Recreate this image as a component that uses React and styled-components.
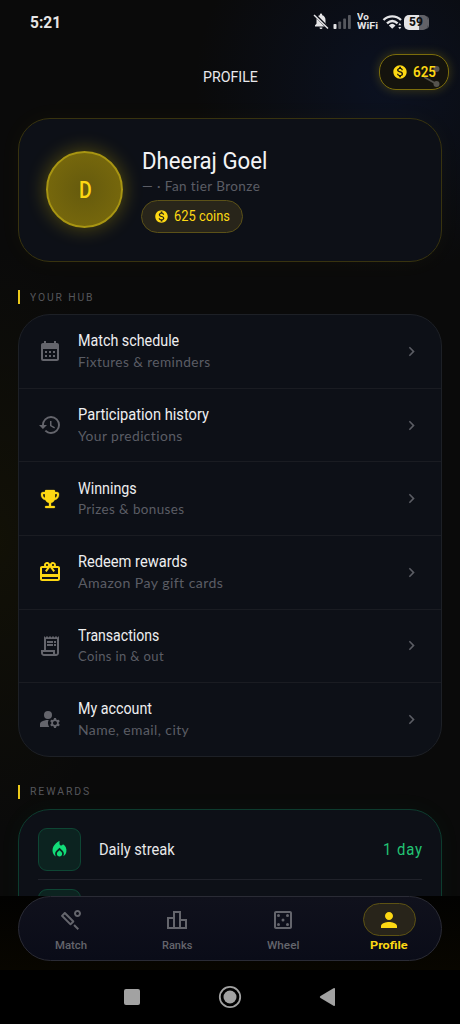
import React, { useLayoutEffect, useRef, useState } from 'react';
import styled, { createGlobalStyle, css } from 'styled-components';
import {
  MdCalendarMonth, MdHistory, MdRedeem, MdOutlineReceiptLong,
  MdManageAccounts, MdLocalFireDepartment, MdMonetizationOn, MdChevronRight,
  MdOutlineSportsCricket, MdOutlineLeaderboard, MdOutlineCasino, MdPerson,
} from 'react-icons/md';

const YELLOW = '#fdd813';
const GREEN = '#12dc78';
const GREY = '#64656c';

const GlobalStyle = createGlobalStyle`
  * { box-sizing: border-box; }
  body {
    margin: 0;
    background: #000;
    font-family: Roboto, "Liberation Sans", sans-serif;
  }
`;

const Screen = styled.div`
  width: 460px;
  height: 1024px;
  display: flex;
  flex-direction: column;
  overflow: hidden;
  background: #000;
`;

const Page = styled.div`
  height: 896px;
  padding: 0 18px;
  overflow: hidden;
  background:
    radial-gradient(circle at 385px 85px, rgba(12, 22, 48, 0.6), transparent 190px),
    radial-gradient(ellipse 130px 290px at 0 540px, rgba(30, 27, 0, 0.38), transparent),
    #0a0a0a;
`;

const StatusBar = styled.div`
  height: 44px;
  display: flex;
  align-items: center;
  justify-content: space-between;
  padding: 0 12px;
`;

const StatusIcons = styled.div`
  display: flex;
  align-items: center;
`;

const Header = styled.header`
  height: 74px;
  margin-right: -7px;
  display: grid;
  grid-template-columns: 70px 1fr 70px;
  align-items: start;
  padding-top: 10px;
`;

const HeaderTitle = styled.h1`
  grid-column: 2;
  margin: 0;
  height: 45px;
  display: flex;
  align-items: center;
  justify-content: center;
  padding-right: 6px;
`;

const CoinBadge = styled.div`
  position: relative;
  height: 36px;
  display: flex;
  align-items: center;
  gap: 5px;
  padding-left: 12px;
  color: ${YELLOW};
  border: 1px solid #7c6d0b;
  border-radius: 17px;
  background: #14130d;
  box-shadow: 0 0 11px rgba(250, 215, 0, 0.22);
`;

const ShareMark = styled.svg`
  position: absolute;
  left: 42px;
  top: 10px;
`;

const Card = styled.section`
  border: 1px solid ${props => props.$line || '#1d2026'};
  border-radius: 32px;
  background: #0d1017;
  box-shadow: 0 0 24px ${props => props.$glow || 'transparent'};
`;

const ProfileCard = styled(Card)`
  height: 144px;
  display: flex;
  align-items: center;
  gap: 19px;
  padding: 0 0 1px 27px;
`;

const Avatar = styled.div`
  width: 77px;
  height: 77px;
  display: flex;
  align-items: center;
  justify-content: center;
  padding-left: 1px;
  border: 2px solid #a89512;
  border-radius: 50%;
  background: radial-gradient(circle, #655a0d, #7c6c0c);
  box-shadow: 0 0 20px rgba(250, 215, 0, 0.32);
`;

const ProfileInfo = styled.div`
  display: flex;
  flex-direction: column;
  align-items: flex-start;
`;

const CoinPill = styled.div`
  height: 33px;
  width: 102px;
  margin: 3px 0 0 -1px;
  display: flex;
  align-items: center;
  gap: 5px;
  padding-left: 12px;
  color: ${YELLOW};
  border: 1px solid #5b5118;
  border-radius: 17px;
  background: #28251a;
`;

const SectionTitle = styled.h2`
  height: 14px;
  margin: 28px 0 10px;
  padding-left: 10px;
  display: flex;
  align-items: center;
  border-left: 2.5px solid #ecc91a;
`;

const Row = styled.div`
  height: 72.8px;
  display: flex;
  align-items: center;
  padding: 0 20px 0 19px;
  color: ${props => (props.$bright ? YELLOW : GREY)};
  & + & {
    height: 73.6px;
    border-top: 1px solid #1a1c22;
  }
`;

const RowIcon = styled.div`
  display: flex;
  stroke: currentColor;
  stroke-width: 0.3px;
`;

const RowText = styled.div`
  flex: 1;
  padding-left: 16px;
`;

const RewardsCard = styled(Card)`
  height: 180px;
  padding: 18px 19px;
`;

const RewardRow = styled.div`
  height: 51px;
  display: flex;
  align-items: flex-start;
  & + & {
    height: 61px;
    padding-top: 9px;
    border-top: 1px solid #20222a;
  }
`;

const RewardTile = styled.div`
  width: 43px;
  height: 43px;
  margin-right: 18px;
  display: flex;
  align-items: center;
  justify-content: center;
  color: ${GREEN};
  border: 1px solid #0e4634;
  border-radius: 9px;
  background: #0c2320;
`;

const RewardLine = styled.div`
  flex: 1;
  height: 43px;
  display: flex;
  align-items: center;
  justify-content: space-between;
`;

const BottomArea = styled.div`
  height: 74px;
  padding: 0 18px;
  background: linear-gradient(#020201, #080600);
`;

const TabBar = styled.nav`
  height: 65px;
  display: grid;
  grid-template-columns: repeat(4, 106px);
  justify-content: center;
  border: 1px solid #2a2b35;
  border-radius: 33px;
  background: linear-gradient(#10111c, #0a0c18);
`;

const Tab = styled.div`
  display: flex;
  flex-direction: column;
  align-items: center;
  padding-top: 6px;
  color: ${props => (props.$active ? YELLOW : GREY)};
`;

const TabIcon = styled.div`
  width: 53px;
  height: 33px;
  margin-bottom: 1px;
  display: flex;
  align-items: center;
  justify-content: center;
  border: 1px solid transparent;
  border-radius: 17px;
  ${props => props.$active && css`
    border-color: #5d5213;
    background: #28241a;
  `}
`;

const SystemBar = styled.div`
  flex: 1;
  display: flex;
  align-items: center;
  justify-content: center;
  background: #000;
`;

const TextBox = styled.span`
  display: flex;
  align-items: center;
  flex: none;
  width: ${props => props.$width}px;
  height: ${props => props.$line}px;
  font-family: ${props => (props.$soft ? 'Lato, Roboto' : 'Roboto')}, sans-serif;
  font-size: ${props => props.$size}px;
  font-weight: ${props => props.$weight || 400};
  letter-spacing: ${props => props.$spacing || 0}px;
  color: ${props => props.$color || 'inherit'};
  white-space: nowrap;
`;

const TextInner = styled.span`
  display: inline-block;
  transform-origin: left center;
`;

// squeezes the label horizontally so that it fills its width
const Label = ({ width, line = 20, size, weight, spacing = 0, color, soft, children }) => {
  const inner = useRef(null);
  const [scale, setScale] = useState(1);
  useLayoutEffect(() => {
    setScale(width / (inner.current.offsetWidth - spacing));
  }, [width, spacing, children]);
  return (
    <TextBox $width={width} $line={line} $size={size} $weight={weight} $spacing={spacing} $color={color} $soft={soft}>
      <TextInner ref={inner} style={{ transform: `scaleX(${scale})` }}>{children}</TextInner>
    </TextBox>
  );
};

const Trophy = ({ size }) => (
  <svg width={size} height={size} viewBox="0 0 24 24" fill="currentColor">
    <path d="M19 5h-2V4c0-.55-.45-1-1-1H8c-.55 0-1 .45-1 1v1H5c-1.100 0-2 .900-2 2v1c0 2.550 1.920 4.630 4.390 4.940.630 1.500 1.980 2.630 3.610 2.960V19H8c-.550 0-1 .450-1 1s.450 1 1 1h8c.550 0 1-.450 1-1s-.450-1-1-1h-3v-3.100c1.630-.330 2.980-1.460 3.610-2.960C19.080 12.630 21 10.550 21 8V7c0-1.100-.900-2-2-2zM5 8V7h2v3.820C5.840 10.400 5 9.300 5 8zm14 0c0 1.300-.840 2.400-2 2.820V7h2v1z" />
  </svg>
);

const hub = [
  { icon: MdCalendarMonth, title: 'Match schedule', w: 101, text: 'Fixtures & reminders', tw: 132 },
  { icon: MdHistory, title: 'Participation history', w: 131, text: 'Your predictions', tw: 104 },
  { icon: Trophy, title: 'Winnings', w: 59, text: 'Prizes & bonuses', tw: 106, bright: true },
  { icon: MdRedeem, title: 'Redeem rewards', w: 109, text: 'Amazon Pay gift cards', tw: 145, bright: true },
  { icon: MdOutlineReceiptLong, title: 'Transactions', w: 81, text: 'Coins in & out', tw: 86 },
  { icon: MdManageAccounts, title: 'My account', w: 74, text: 'Name, email, city', tw: 111 },
];

const tabs = [
  { icon: MdOutlineSportsCricket, name: 'Match', w: 32 },
  { icon: MdOutlineLeaderboard, name: 'Ranks', w: 30 },
  { icon: MdOutlineCasino, name: 'Wheel', w: 32 },
  { icon: MdPerson, name: 'Profile', w: 38, active: true },
];

const VoWifi = styled.span`
  width: 22px;
  margin: 0 3px 0 4px;
  display: flex;
  flex-direction: column;
  font-size: 9px;
  font-weight: 700;
  line-height: 9px;
  color: #e4e4e6;
`;

const Battery = styled.span`
  height: 15px;
  width: 24px;
  margin-right: 2px;
  display: flex;
  align-items: center;
  justify-content: center;
  border-radius: 5px;
  background: linear-gradient(90deg, #e4e4e6 64%, #626268 64%);
  box-shadow: 2px 0 0 -1px #626268;
  font-size: 12px;
  font-weight: 800;
  color: #111;
`;

const BellAndSignal = () => (
  <svg width="40" height="20" viewBox="2 0 40 20" fill="#e4e4e6">
    <path d="M4 14.500v-1.200l1.500-1.500V8c0-2.400 1.200-4.200 3.300-4.700V2.700a1.200 1.200 0 0 1 2.400 0v.6C13.300 3.800 14.500 5.600 14.500 8v3.800l1.500 1.500v1.200zM8.500 15.500h3a1.500 1.500 0 0 1-3 0z" />
    <path d="M3 2 17.500 16.500" stroke="#090c14" strokeWidth="3" />
    <path d="m3 3 14 13.500" stroke="#e4e4e6" strokeWidth="1.500" />
    <rect x="22.500" y="12" width="3" height="5" rx=".8" />
    <g fill="#56585e">
      <rect x="27.300" y="9.500" width="2.800" height="7.500" rx=".8" />
      <rect x="32.200" y="6.500" width="2.800" height="10.500" rx=".8" />
      <rect x="37" y="3" width="2.800" height="14" rx=".8" />
    </g>
  </svg>
);

const Wifi = () => (
  <svg width="22" height="20" viewBox="70 0 22 20" fill="#e4e4e6">
    <g fill="none" stroke="#e4e4e6" strokeWidth="2.400">
      <path d="M71.500 8c5-4.900 12.500-4.900 17.500 0" />
      <path d="M75 11.400c3.300-3.100 7.300-3.100 10.600 0" />
    </g>
    <path d="M76.900 13.400a4.800 4.800 0 0 1 6.600 0L80.200 16.800z" />
    <path d="M87.800 11 89.300 13.300h-3zM87.800 17.300 86.300 15h3z" />
  </svg>
);

const App = () => (
  <>
    <GlobalStyle />
    <Screen>
      <Page>
        <StatusBar>
          <Label width={31} size={16.500} weight={700} color="#e6e6e6">5:21</Label>
          <StatusIcons>
            <BellAndSignal />
            <VoWifi>
              <Label width={12} line={9} size={9} weight={700}>Vo</Label>
              <Label width={21.500} line={9} size={9} weight={700}>WiFi</Label>
            </VoWifi>
            <Wifi />
            <Battery>59</Battery>
          </StatusIcons>
        </StatusBar>
        <Header>
          <HeaderTitle><Label width={55} size={15.500} color="#e8e8ec">PROFILE</Label></HeaderTitle>
          <CoinBadge>
            <ShareMark width="20" height="24" viewBox="0 0 20 24" fill="#56544e">
              <circle cx="14.500" cy="4" r="3" />
              <circle cx="14.500" cy="19" r="3" />
              <path d="m2 12 12.500 7" stroke="#56544e" strokeWidth="1.800" />
            </ShareMark>
            <MdMonetizationOn size={16} />
            <Label width={23} size={14} weight={600}>625</Label>
          </CoinBadge>
        </Header>
        <ProfileCard $line="#38330f" $glow="rgba(250, 215, 0, 0.035)">
          <Avatar><Label width={13} line={30} size={24} weight={500} color={YELLOW}>D</Label></Avatar>
          <ProfileInfo>
            <Label width={125} line={29} size={24} color="#f3f3f5">Dheeraj Goel</Label>
            <Label width={118} line={22} size={13} spacing={0.400} soft color="#5b5d65">— · Fan tier Bronze</Label>
            <CoinPill>
              <MdMonetizationOn size={15} />
              <Label width={56} size={14.500}>625 coins</Label>
            </CoinPill>
          </ProfileInfo>
        </ProfileCard>
        <SectionTitle><Label width={63} size={11} spacing={2} color="#55565a">YOUR HUB</Label></SectionTitle>
        <Card>
          {hub.map(({ icon: Icon, title, w, text, tw, bright }) => (
            <Row key={title} $bright={bright}>
              <RowIcon><Icon size={24} /></RowIcon>
              <RowText>
                <Label width={w} line={21} size={16} color="#eeeef0">{title}</Label>
                <Label width={tw} line={21} size={13.500} spacing={0.400} soft color="#5b5d65">{text}</Label>
              </RowText>
              <MdChevronRight size={19} color="#5b5d64" />
            </Row>
          ))}
        </Card>
        <SectionTitle><Label width={59} size={11} spacing={2} color="#55565a">REWARDS</Label></SectionTitle>
        <RewardsCard $line="#0d3c2e" $glow="rgba(18, 220, 120, 0.04)">
          <RewardRow>
            <RewardTile><MdLocalFireDepartment size={21} /></RewardTile>
            <RewardLine>
              <Label width={76} size={16} color="#e8e8ea">Daily streak</Label>
              <Label width={39} size={16} spacing={1} color="#22c474">1 day</Label>
            </RewardLine>
          </RewardRow>
          <RewardRow><RewardTile /></RewardRow>
        </RewardsCard>
      </Page>
      <BottomArea>
        <TabBar>
          {tabs.map(({ icon: Icon, name, w, active }) => (
            <Tab key={name} $active={active}>
              <TabIcon $active={active}><Icon size={24} /></TabIcon>
              <Label width={w} line={17} size={11} weight={active ? 700 : 500}>{name}</Label>
            </Tab>
          ))}
        </TabBar>
      </BottomArea>
      <SystemBar>
        <svg width="220" height="24" viewBox="0 0 220 24" fill="#a2a2a2">
          <rect x="4" y="4" width="16" height="16" rx="2" />
          <circle cx="110" cy="12" r="10.200" fill="none" stroke="#a2a2a2" strokeWidth="1.800" />
          <circle cx="110" cy="12" r="6.500" />
          <path d="M200.500 11 213.500 3.200q1.500-.700 1.500.800v16q0 1.500-1.500.800L200.500 13q-1.500-1 0-2z" />
        </svg>
      </SystemBar>
    </Screen>
  </>
);

export default App;
